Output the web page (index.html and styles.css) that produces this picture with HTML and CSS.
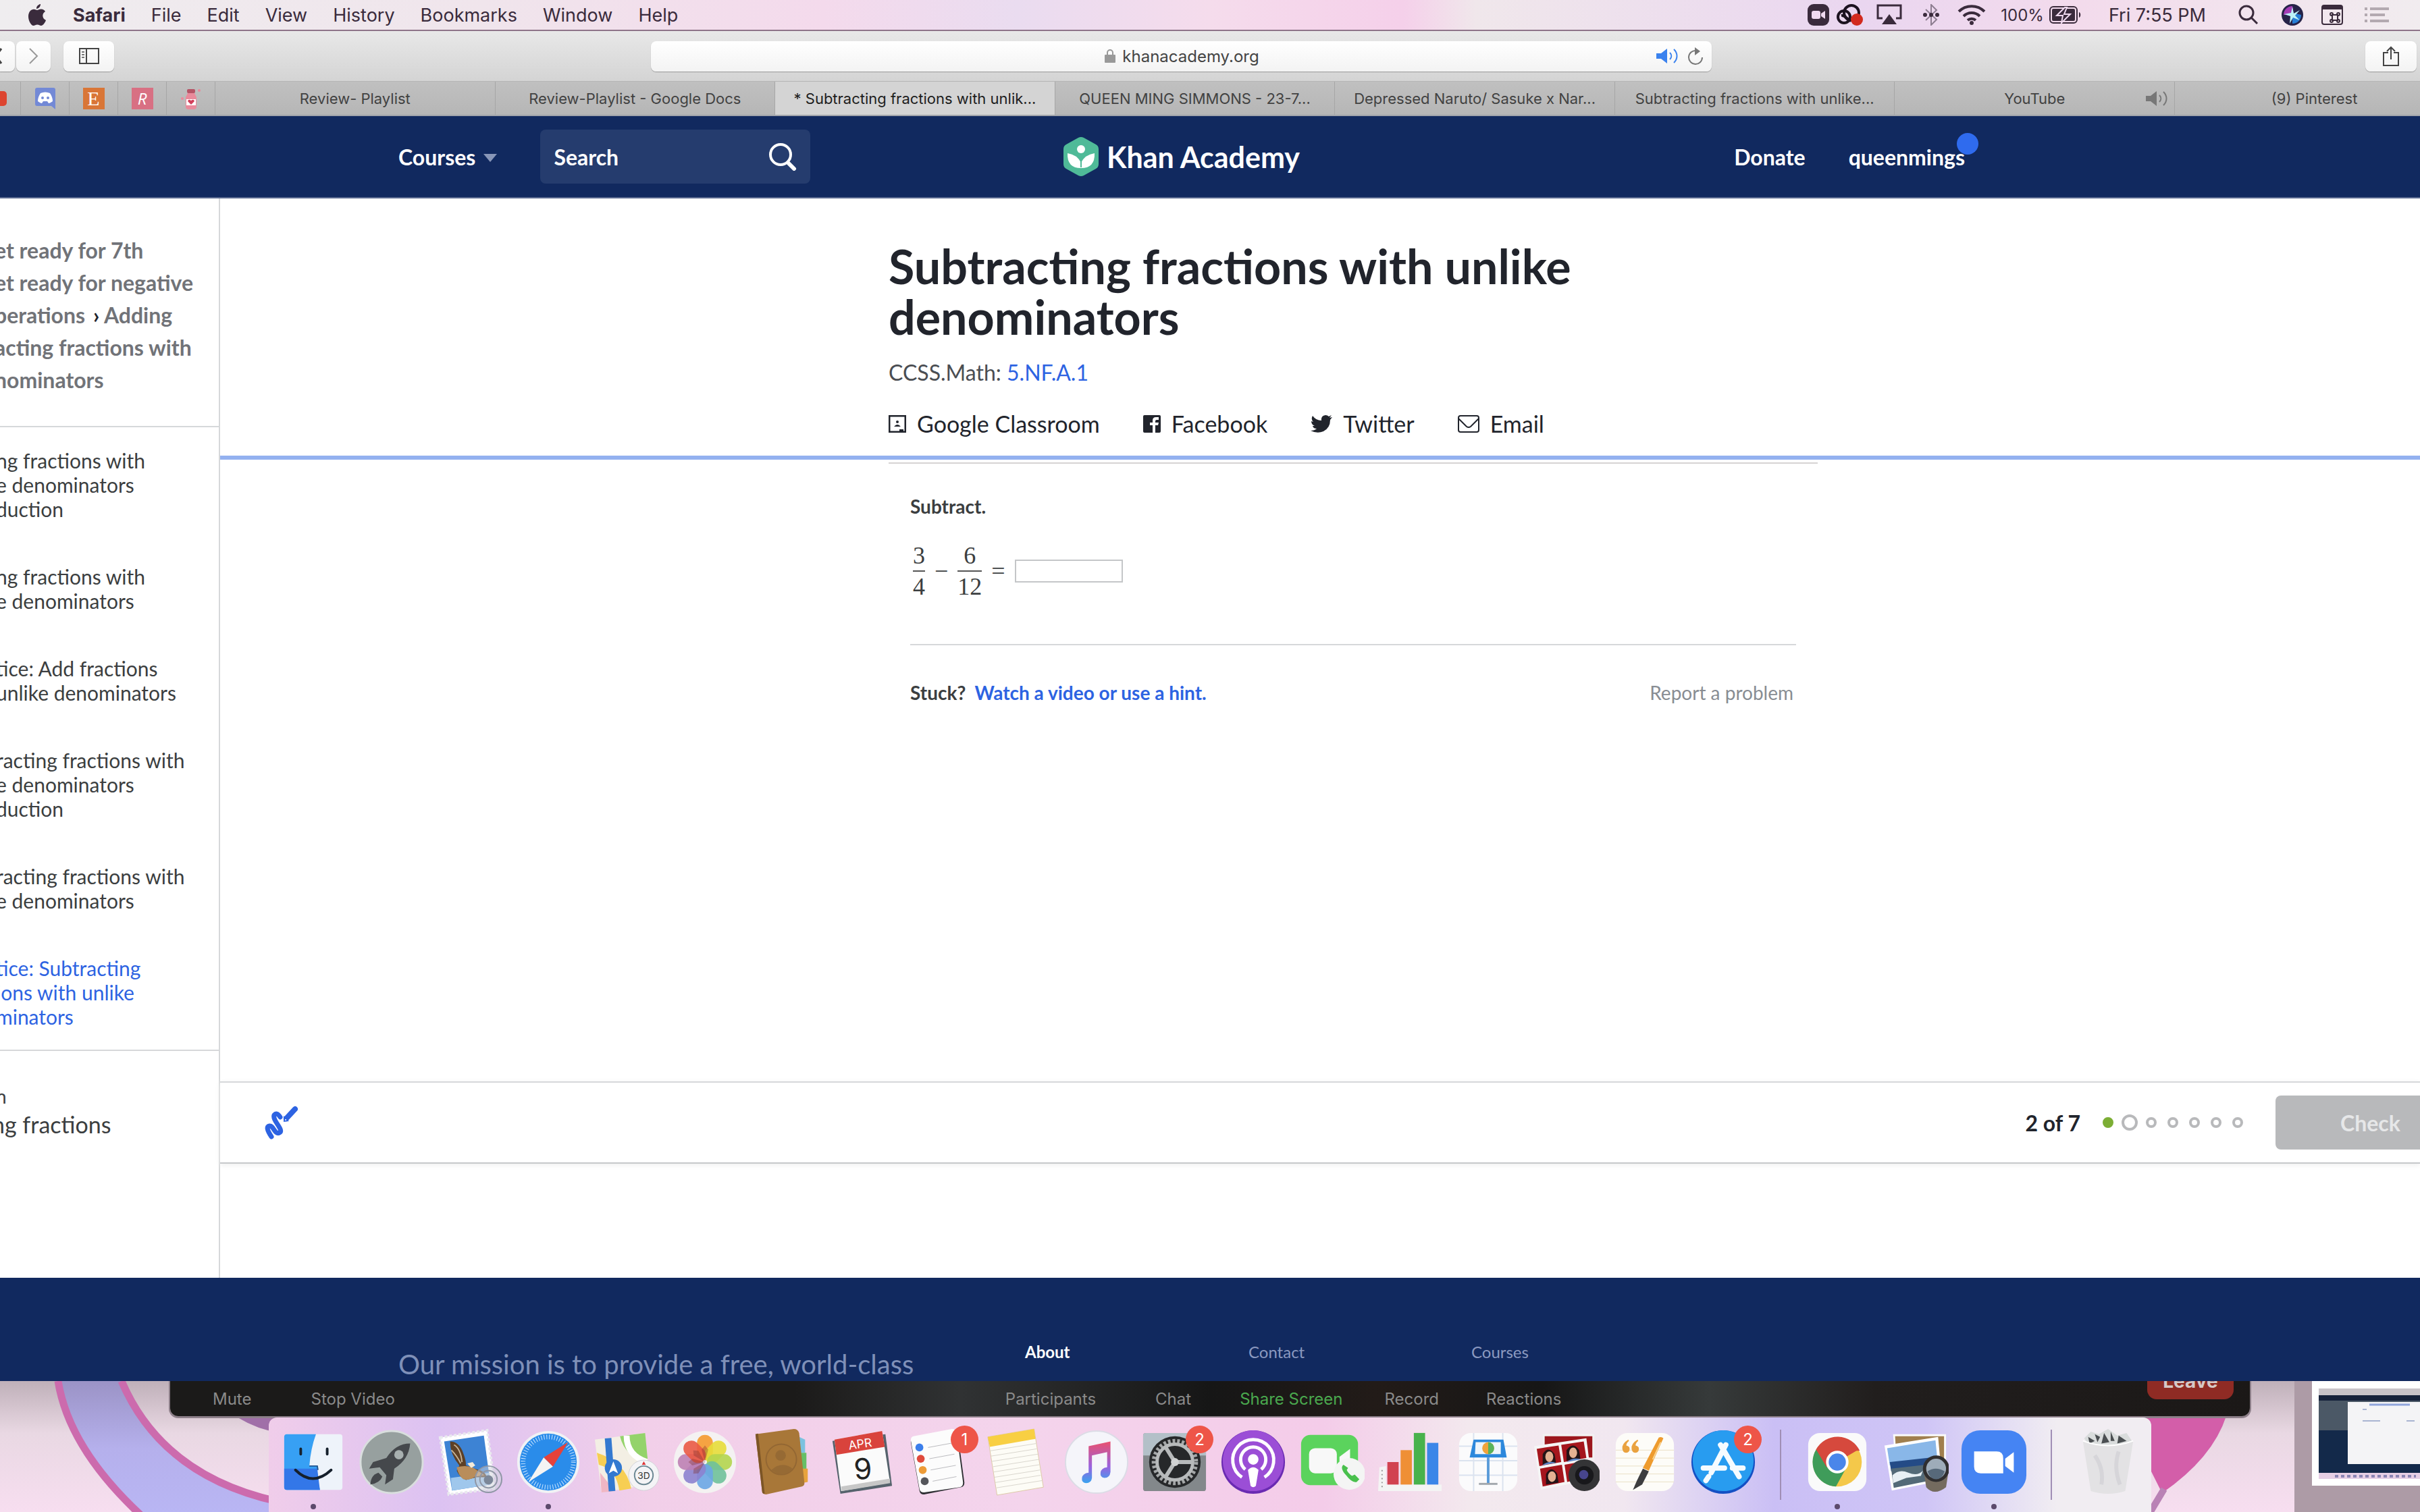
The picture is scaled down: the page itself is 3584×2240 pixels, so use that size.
FILE: index.html
```html
<!DOCTYPE html>
<html lang="en">
<head>
  <meta charset="UTF-8" />
  <meta name="viewport" content="width=device-width, initial-scale=1.0" />
  <title>Subtracting fractions with unlike denominators | Khan Academy</title>
  <link rel="stylesheet" href="styles.css">
</head>
<body>
  <div class="menubar">
    <svg class="apple" viewBox="0 0 26 32"><path d="M18 0c.3 3-2.400 7-6 7-.4-3 2.500-6.500 6-7zM13 9c1.500 0 3-1.500 6-1.400 2.600.1 4.800 1.500 6 3.400-5.500 3.400-4.500 10.500 1 13-1 3-4 7.800-7 7.900-2.300 0-3-1.400-5.700-1.400S9.700 31.900 7.500 32C4 32 0 24.500 0 18.500 0 11.500 4 7.800 8 7.700c2.500 0 4 1.300 5 1.300z"/></svg>
    <nav class="menus">
      <b>Safari</b><span>File</span><span>Edit</span><span>View</span><span>History</span><span>Bookmarks</span><span>Window</span><span>Help</span>
    </nav>
    <div class="status">
      <svg class="s32" viewBox="0 0 32 32"><rect width="32" height="32" rx="9"/><rect x="6" y="10" width="13" height="12" rx="3" fill="#f0daf0"/><path d="M20 14l6-4v12l-6-4z" fill="#f0daf0"/></svg>
      <svg class="cc" viewBox="0 0 42 34"><g fill="none" stroke="#1c1220" stroke-width="4"><circle cx="12" cy="20" r="9"/><circle cx="23" cy="14" r="11"/><path d="M8 18c6-1 8 6 14 8"/></g><circle cx="31" cy="24" r="9" fill="#d22a1e"/></svg>
      <svg class="airplay" viewBox="0 0 38 32"><path d="M9 21H2V2h34v19h-7" fill="none" stroke="#3a2b3c" stroke-width="3"/><path d="M19 15l11 15H8z"/></svg>
      <svg class="bt" viewBox="0 0 24 32"><path d="M4 8l16 15-8 8V1l8 8L4 24" fill="none" stroke="#8d7d90" stroke-width="2"/><circle cx="3" cy="16" r="3"/><circle cx="12" cy="16" r="3"/><circle cx="21" cy="16" r="3"/></svg>
      <svg class="wifi" viewBox="0 0 42 32"><g fill="none" stroke="#3a2b3c" stroke-width="4"><path d="M2 11a27 27 0 0 1 38 0"/><path d="M9 18a17 17 0 0 1 24 0"/><path d="M15 24a9 9 0 0 1 12 0"/></g><circle cx="21" cy="28" r="3"/></svg>
      <span class="percent">100%</span>
      <svg class="battery" viewBox="0 0 48 26"><rect x="1" y="1" width="40" height="24" rx="5" fill="none" stroke="#3a2b3c" stroke-width="2"/><rect x="4" y="4" width="34" height="18" rx="2"/><path d="M23 2l-12 12h9l-2 11 13-13h-9l4-10z" stroke="#f0daf0" stroke-width="2"/><path d="M44 9c3 1 3 7 0 8z"/></svg>
      <span class="clock">Fri 7:55 PM</span>
      <svg class="spot" viewBox="0 0 30 30"><circle cx="12" cy="12" r="10" fill="none" stroke="#3a2b3c" stroke-width="3"/><path d="M19 19l9 9" stroke="#3a2b3c" stroke-width="3"/></svg>
      <svg class="s32" viewBox="0 0 32 32"><circle cx="16" cy="16" r="16" fill="#262348"/><path d="M3 16a13 13 0 0 1 13-13l2 13z" fill="#a33bb5"/><path d="M16 29a13 13 0 0 0 13-13l-13-3z" fill="#277fd6"/><path d="M16 4l2 10 9-5-7 8 7 7-10-4-5 9 1-11-9-3 10-2z" fill="#bdf3f6"/></svg>
      <svg class="kbd" viewBox="0 0 32 30"><rect x="1" y="1" width="30" height="28" rx="3" fill="none" stroke="#3a2b3c" stroke-width="2"/><path d="M1 1h30v6H1z"/><path d="M16 15h8v8h-8z" fill="none" stroke="#3a2b3c" stroke-width="2"/><g fill="none" stroke="#3a2b3c" stroke-width="2"><circle cx="15" cy="14" r="2"/><circle cx="25" cy="14" r="2"/><circle cx="15" cy="24" r="2"/><circle cx="25" cy="24" r="2"/></g></svg>
      <svg class="listicon" viewBox="0 0 36 22"><path d="M0 2h4M8 2h28M0 11h4M8 11h22M0 20h4M8 20h28" stroke="#b3a9b0" stroke-width="4"/></svg>
    </div>
  </div>

  <div class="toolbar">
    <div class="tools">
      <button class="back" aria-label="Back"><svg viewBox="0 0 12 24"><path d="M2 1L-6 12l8 11" fill="none" stroke="#444" stroke-width="3"/></svg></button>
      <button class="forward" aria-label="Forward"><svg viewBox="0 0 14 24"><path d="M1 1l11 11L1 23" fill="none" stroke="#999" stroke-width="2"/></svg></button>
      <button class="panel" aria-label="Show sidebar"><svg viewBox="0 0 30 24"><path d="M1 1h28v22H1zM11 1v22" fill="none" stroke="#444" stroke-width="2"/><path d="M4 6h4M4 10h4M4 14h4" stroke="#777" stroke-width="2"/></svg></button>
    </div>
    <div class="address">
      <span class="host"><svg viewBox="0 0 16 20"><path d="M4 9V5a4 4 0 0 1 8 0v4" fill="none" stroke="#999" stroke-width="2"/><rect y="8" width="16" height="12" rx="1" fill="#999"/></svg>khanacademy.org</span>
      <svg class="sound" viewBox="0 0 34 22"><path d="M0 7h7l9-7v22l-9-7H0z" fill="#3b82ee"/><path d="M20 6c3 3 3 7 0 10M26 1c6 6 6 14 0 20" fill="none" stroke="#3b82ee" stroke-width="2"/></svg>
      <svg class="reload" viewBox="0 0 24 26"><path d="M13 5a10 10 0 1 0 9 10" fill="none" stroke="#777" stroke-width="2"/><path d="M11 0l8 6-8 6z" fill="#777"/></svg>
    </div>
    <button class="share" aria-label="Share"><svg viewBox="0 0 24 30"><path d="M8 10H1v19h22V10h-7M12 20V2M6 8l6-6 6 6" fill="none" stroke="#444" stroke-width="2"/></svg></button>
  </div>

  <div class="tabs">
    <div class="pin cut"><svg viewBox="0 0 10 22"><path d="M0 0h5a5 5 0 0 1 5 5v12a5 5 0 0 1-5 5H0z" fill="#dd4530"/></svg></div>
    <div class="pin"><svg viewBox="0 0 32 32"><path d="M4 0h24a3 3 0 0 1 3 3v29l-6-5H4a3 3 0 0 1-3-3V3a3 3 0 0 1 3-3z" fill="#7389d6"/><path d="M9 8q7-3 14 0 4 6 4 12-4 3-6 3l-2-3h-6l-2 3q-2 0-6-3 0-6 4-12z" fill="#fff"/><circle cx="12" cy="15" r="2" fill="#7389d6"/><circle cx="20" cy="15" r="2" fill="#7389d6"/></svg></div>
    <div class="pin"><span class="etsy">E</span></div>
    <div class="pin"><span class="redbubble">R</span></div>
    <div class="pin"><svg viewBox="0 0 32 32"><rect x="10" y="2" width="12" height="6" rx="2" fill="#b65466"/><path d="M11 8h10l3 6v14a4 4 0 0 1-4 4h-8a4 4 0 0 1-4-4V14z" fill="#e98a9b"/><path d="M9 17h14v9H9z" fill="#fff"/><path d="M16 25l-5-5q1-4 5-1 4-3 5 1z" fill="#d2405b"/><circle cx="28" cy="4" r="2" fill="#e98a9b"/><circle cx="3" cy="16" r="2" fill="#e98a9b"/></svg></div>
    <div class="tab">Review- Playlist</div>
    <div class="tab">Review-Playlist - Google Docs</div>
    <div class="tab current">* Subtracting fractions with unlik...</div>
    <div class="tab">QUEEN MING SIMMONS - 23-7...</div>
    <div class="tab">Depressed Naruto/ Sasuke x Nar...</div>
    <div class="tab">Subtracting fractions with unlike...</div>
    <div class="tab">YouTube<svg class="tabsound" viewBox="0 0 34 22"><path d="M0 7h7l9-7v22l-9-7H0z" fill="#777"/><path d="M20 6c3 3 3 7 0 10M26 1c6 6 6 14 0 20" fill="none" stroke="#777" stroke-width="2"/></svg></div>
    <div class="tab last">(9) Pinterest</div>
  </div>

  <header class="site-header">
    <div class="header-left">
      <a class="courses" href="#">Courses<svg viewBox="0 0 20 12"><path d="M0 0h20L10 12z" fill="#8896b8"/></svg></a>
      <div class="search">
        <input type="text" aria-label="Search" placeholder="Search">
        <svg viewBox="0 0 42 42"><circle cx="18" cy="18" r="15" fill="none" stroke="#fff" stroke-width="4"/><path d="M29 30l9 9" stroke="#fff" stroke-width="6" stroke-linecap="round"/></svg>
      </div>
    </div>
    <a class="logo" href="#">
      <svg viewBox="0 0 52 58"><path d="M22 1q4-2 8 0l18 10q4 2 4 7v22q0 5-4 7L30 57q-4 2-8 0L4 47q-4-2-4-7V18q0-5 4-7z" fill="#4fba98"/><circle cx="26" cy="18" r="6" fill="#fff"/><path d="M6 24q14 2 20 14 6-12 20-14 1 22-20 22Q5 46 6 24z" fill="#fff"/><path d="M26 35v10" stroke="#4fba98" stroke-width="2"/></svg>
      Khan Academy
    </a>
    <div class="header-right">
      <a href="#">Donate</a>
      <a class="user" href="#">queenmings<span class="badge"></span></a>
    </div>
  </header>

  <div class="page">
    <aside class="sidebar">
      <div class="crumbs">et ready for 7th<br>et ready for negative<br>perations <i>&rsaquo;</i> Adding<br>acting fractions with<br>nominators</div>
      <ul class="lessons">
        <li><a href="#">ng fractions with<br>e denominators<br>duction</a></li>
        <li><a href="#">ng fractions with<br>e denominators</a></li>
        <li><a href="#">tice: Add fractions<br>unlike denominators</a></li>
        <li><a href="#">racting fractions with<br>e denominators<br>duction</a></li>
        <li><a href="#">racting fractions with<br>e denominators</a></li>
        <li><a class="active" href="#">tice: Subtracting<br>ions with unlike<br>minators</a></li>
      </ul>
      <div class="next"><small>n</small><br>ng fractions</div>
    </aside>

    <main>
      <div class="intro">
        <h1>Subtracting fractions with unlike denominators</h1>
        <p class="standard">CCSS.Math: <a href="#">5.NF.A.1</a></p>
        <div class="sharing">
          <a href="#"><svg class="i26" viewBox="0 0 26 26"><rect x="1" y="1" width="24" height="24" fill="none" stroke="#21242c" stroke-width="3"/><circle cx="13" cy="10" r="2"/><path d="M8 17q5-6 10 0zM16 21h6v3h-6z"/></svg>Google Classroom</a>
          <a href="#"><svg class="i26" viewBox="0 0 26 26"><rect width="26" height="26" rx="2"/><path d="M14 26V15h-4v-4h4V8q0-5 5-5h4v4h-3q-2 0-2 2v2h5l-1 4h-4v11z" fill="#fff"/></svg>Facebook</a>
          <a href="#"><svg class="i32" viewBox="0 0 32 26"><path d="M32 3l-3 4q0 12-10 17-9 4-19-1 6 0 9-3-5 0-6-4h3q-5-2-5-7l3 1q-4-4-1-9 5 7 13 7Q15 1 22 0q3 0 5 2l4-2-3 4z"/></svg>Twitter</a>
          <a href="#"><svg class="i32" viewBox="0 0 32 26"><rect x="1" y="1" width="30" height="24" rx="3" fill="none" stroke="#21242c" stroke-width="2"/><path d="M1 5l12 12q3 2 6 0L31 5" fill="none" stroke="#21242c" stroke-width="2"/></svg>Email</a>
        </div>
      </div>
      <div class="exercise">
        <div class="question">
          <p class="prompt"><label for="answer">Subtract.</label></p>
          <div class="equation">
            <span class="frac"><span>3</span><span>4</span></span>
            <span>&minus;</span>
            <span class="frac"><span>6</span><span>12</span></span>
            <span>=</span>
            <input id="answer" type="text">
          </div>
          <div class="stuck">
            <span><b>Stuck?</b> <a href="#">Watch a video or use a hint.</a></span>
            <a class="report" href="#">Report a problem</a>
          </div>
        </div>
      </div>
      <div class="taskbar">
        <button class="scratch" aria-label="Scratchpad"><svg viewBox="0 0 50 50"><path d="M10 46Q0 31 7 30c6-1 8 14 15 10 7-4-11-18-8-26q4-5 9 3" fill="none" stroke="#2d63e2" stroke-width="7" stroke-linecap="round" stroke-linejoin="round"/><path d="M32 19L45 5" stroke="#2d63e2" stroke-width="8" stroke-linecap="round"/><path d="M28 15l8 8-8 1z" fill="#2d63e2"/><circle cx="31" cy="21" r="1" fill="#fff"/></svg></button>
        <div class="progress">
          <span class="count">2 of 7</span>
          <span class="dot done"></span><span class="dot now"></span><span class="dot"></span><span class="dot"></span><span class="dot"></span><span class="dot"></span><span class="dot"></span>
        </div>
        <button class="check" disabled>Check</button>
      </div>
    </main>
  </div>

  <footer class="site-footer">
    <p class="mission">Our mission is to provide a free, world-class</p>
    <a class="about" href="#">About</a>
    <a href="#">Contact</a>
    <a href="#">Courses</a>
  </footer>

  <div class="desktop">
    <svg class="wallpaper" viewBox="0 0 3584 194" preserveAspectRatio="none">
      <defs>
        <linearGradient id="wall" x2="0" y2="1"><stop offset="0" stop-color="#bfb0b9"/><stop offset=".4" stop-color="#e9d8e3"/><stop offset="1" stop-color="#f7def0"/></linearGradient>
        <linearGradient id="band" x2="0" y2="1"><stop offset="0" stop-color="#9b93c6"/><stop offset=".5" stop-color="#b5b0ec"/><stop offset="1" stop-color="#b9b6f4"/></linearGradient>
      </defs>
      <rect width="3584" height="194" fill="url(#wall)"/>
      <path d="M86 0Q102 100 210 200h300l-110-22Q240 140 180 0z" fill="url(#band)"/>
      <path d="M86 0Q102 100 210 200M180 0Q240 140 410 178" fill="none" stroke="#cc6bad" stroke-width="11"/>
      <path d="M352 54q30 18 60 22V54z" fill="#a06fa8"/>
      <path d="M3100 52h197q-20 62-95 114l-30-60z" fill="#d35ea9"/>
      <path d="M3205 160l-24 40" stroke="#b982b5" stroke-width="10"/>
    </svg>
    <div class="zoombar">
      <span class="z-mute">Mute</span><span class="z-video">Stop Video</span>
      <span class="z-mid">Participants</span><span class="z-chat">Chat</span><span class="z-share">Share Screen</span><span class="z-rec">Record</span><span class="z-react">Reactions</span>
      <button class="leave">Leave</button>
    </div>

    <div class="dock">
      <!-- Finder -->
      <div class="app running"><svg viewBox="0 0 100 100"><rect x="6" y="8" width="88" height="84" rx="4" fill="#eef3fa"/><path d="M10 8h44q-8 22-10 48h12q0 20 4 36H10a4 4 0 0 1-4-4V12a4 4 0 0 1 4-4z" fill="#37a0f4"/><path d="M6 60h50l4 32H10a4 4 0 0 1-4-4z" fill="#3377e8"/><path d="M44 56h12l1 6" fill="none" stroke="#24558f" stroke-width="2"/><path d="M31 30v8M71 30v8M23 62q26 26 54 0" fill="none" stroke="#16202c" stroke-width="4" stroke-linecap="round"/></svg></div>
      <!-- Launchpad -->
      <div class="app"><svg viewBox="0 0 100 100"><circle cx="50" cy="50" r="47" fill="#97a09f" stroke="#d9dede" stroke-width="3"/><path d="M78 22q-22 0-36 22l-20 6-6 10 16-2 10 12-2 14 12-8 2-16q22-14 24-38z" fill="#45484c"/><circle cx="61" cy="39" r="7" fill="#a8b0b0"/><path d="M30 66q-12 4-12 18 14-2 18-12z" fill="#45484c"/></svg></div>
      <!-- Mail -->
      <div class="app"><svg viewBox="0 0 100 100"><path d="M5 13L76 2l12 88-70 9z" fill="#fff" stroke="#e9e9ee" stroke-width="4" stroke-dasharray="4 3"/><path d="M11 19l60-9 10 74-58 9z" fill="#3d83d4"/><path d="M21 74l58-8 2 18-58 9z" fill="#9fc7ec"/><path d="M20 19q14 0 20 18 4 10 4 18l16 6q12 2 16 12-10 0-16 0l-16 4q-10-4-14-14l4-8q-14-16-14-36z" fill="#5d4026"/><path d="M30 58q12-4 24 0l18 12-14 2q-8 6-18 4-8-6-10-18z" fill="#b98d5b"/><path d="M46 52l8-2 4 5-6 4z" fill="#f3ead9"/><path d="M26 24q10 6 12 26M22 32q8 8 14 20" stroke="#c7b294" stroke-width="2" fill="none"/><circle cx="78" cy="76" r="20" fill="#cfd3dc" fill-opacity=".5" stroke="#8f96a5" stroke-width="2"/><circle cx="78" cy="76" r="13" fill="none" stroke="#8f96a5" stroke-width="2"/><circle cx="78" cy="77" r="7" fill="#7c8798"/></svg></div>
      <!-- Safari -->
      <div class="app running"><svg viewBox="0 0 100 100"><circle cx="50" cy="50" r="47" fill="#f0f2f5"/><circle cx="50" cy="50" r="43" fill="#2a8cea"/><circle cx="50" cy="50" r="38" fill="none" stroke="#cfe7ff" stroke-width="7" stroke-dasharray="1 3"/><path d="M80 20L57 57 43 43z" fill="#e5423b"/><path d="M20 80l23-37 14 14z" fill="#f4f4f4"/></svg></div>
      <!-- Maps -->
      <div class="app"><svg viewBox="0 0 100 100"><path d="M2 16L78 6l6 78-72 12z" fill="#f3efe4"/><path d="M40 11l38-5 4 42q-34-4-42-37z" fill="#94d36b"/><path d="M50 10q0 30 31 40" fill="none" stroke="#fff" stroke-width="9"/><path d="M5 36q44 14 52 54l-18 3Q34 60 8 54z" fill="#f7ce53"/><path d="M10 66l22 28-20 2z" fill="#f0b6c4"/><path d="M22 14l6 80" stroke="#3379d0" stroke-width="10"/><circle cx="30" cy="59" r="13" fill="#3379d0"/><path d="M30 49l7 18-7-4-7 4z" fill="#fff"/><circle cx="76" cy="70" r="23" fill="#f4f4f6" stroke="#d2d2d8" stroke-width="1"/><circle cx="76" cy="70" r="14" fill="none" stroke="#6b8793" stroke-width="2"/><path d="M76 49l3 5h-6z" fill="#d33"/><text x="76" y="75" text-anchor="middle" font-family="Inter, sans-serif" font-size="14" fill="#333">3D</text></svg></div>
      <!-- Photos -->
      <div class="app"><svg viewBox="0 0 100 100"><circle cx="50" cy="50" r="47" fill="#f4f2f2"/><g fill-opacity=".9"><rect x="38" y="9" width="24" height="38" rx="12" fill="#f59a2f"/><rect x="38" y="9" width="24" height="38" rx="12" fill="#e7dd3a" transform="rotate(45 50 50)"/><rect x="38" y="9" width="24" height="38" rx="12" fill="#b4d54e" transform="rotate(90 50 50)"/><rect x="38" y="9" width="24" height="38" rx="12" fill="#6fc19a" transform="rotate(135 50 50)"/><rect x="38" y="9" width="24" height="38" rx="12" fill="#6ba6e4" transform="rotate(180 50 50)"/><rect x="38" y="9" width="24" height="38" rx="12" fill="#8c82cf" transform="rotate(225 50 50)"/><rect x="38" y="9" width="24" height="38" rx="12" fill="#be7fb4" transform="rotate(270 50 50)"/><rect x="38" y="9" width="24" height="38" rx="12" fill="#ea5a45" transform="rotate(315 50 50)"/></g><g fill="#7c2f2a" fill-opacity=".35"><path d="M50 50l-5-19 5-6 5 6z"/><path d="M50 50l-5-19 5-6 5 6z" transform="rotate(270 50 50)"/><path d="M50 50l-5-19 5-6 5 6z" transform="rotate(225 50 50)"/><path d="M50 50l-5-19 5-6 5 6z" transform="rotate(315 50 50)"/></g></svg></div>
      <!-- Contacts -->
      <div class="app"><svg viewBox="0 0 100 100"><path d="M74 12l9 4v20h-9z" fill="#7cc2e0"/><path d="M76 36h9v26h-9z" fill="#67bf67"/><path d="M78 60h9v20l-9 2z" fill="#e7a33c"/><path d="M8 8L66 0q6 0 8 6l8 76q0 4-4 5L24 99q-6 0-6-5z" fill="#a87738"/><path d="M8 8l4-1 10 91q-4 0-4-4z" fill="#7c5526"/><circle cx="47" cy="46" r="23" fill="none" stroke="#936733" stroke-width="2"/><circle cx="46" cy="40" r="8" fill="#966a34"/><path d="M32 62q16-14 32-2-14 16-32 2z" fill="#966a34"/></svg></div>
      <!-- Calendar -->
      <div class="app"><svg viewBox="0 0 100 100"><path d="M6 18l80-10 10 78-78 12z" fill="#56636d"/><path d="M9 16L81 3l12 78-74 13z" fill="#fbfbfb"/><path d="M9 16L81 3l4 24-73 12z" fill="#d9433c"/><text x="48" y="29" text-anchor="middle" font-family="Inter, sans-serif" font-size="18" fill="#fff" transform="rotate(-8 48 24)">APR</text><text x="52" y="76" text-anchor="middle" font-family="Inter, sans-serif" font-size="44" fill="#222" transform="rotate(-5 52 60)">9</text><path d="M19 87l74-12v7l-73 12z" fill="#c7c7c7"/></svg></div>
      <!-- Reminders -->
      <div class="app"><svg viewBox="0 0 100 100"><path d="M10 14L70 2q6 0 7 5l10 74q0 6-5 7L26 99q-6 0-7-6L6 20q0-5 4-6z" fill="#2e2f33"/><path d="M10 11L68 0q6 0 7 5l10 76q0 6-5 7L26 96q-6 0-7-6L6 17q0-5 4-6z" fill="#fcfcfc"/><circle cx="19" cy="28" r="6" fill="#3b7eeb"/><circle cx="21" cy="45" r="6" fill="#e04a3c"/><circle cx="24" cy="62" r="6" fill="#ed9b37"/><circle cx="27" cy="79" r="6" fill="#55565b"/><path d="M32 28l38-7M34 45l38-7M36 62l38-7M39 79l36-7" stroke="#b9b9bd" stroke-width="1"/></svg><span class="count-badge">1</span></div>
      <!-- Notes -->
      <div class="app"><svg viewBox="0 0 100 100"><path d="M4 12L74 0l14 88-70 12z" fill="#fdfcf6" stroke="#dcc9a6"/><path d="M4 12L74 0l2 15L7 27z" fill="#f8cf43"/><path d="M8 33l69-11M9 41l69-11M10 49l70-11M12 57l69-11M13 65l69-11M14 73l69-11M15 81l69-11M17 89l69-11" stroke="#d8d5cd" stroke-width="1"/></svg></div>
      <!-- Music -->
      <div class="app"><svg viewBox="0 0 100 100"><defs><linearGradient id="note" x2="0" y2="1"><stop offset="0" stop-color="#e9526f"/><stop offset=".6" stop-color="#9a61de"/><stop offset="1" stop-color="#38a4f0"/></linearGradient></defs><circle cx="50" cy="50" r="47" fill="#f5f5fa" stroke="#dcdce6" stroke-width="2"/><path d="M38 26l33-7v46q-1 9-9 9-7-1-6-8 1-7 10-8V35l-23 5v34q-1 8-9 8-7-1-6-8 1-7 10-8z" fill="url(#note)"/></svg></div>
      <!-- System Preferences -->
      <div class="app"><svg viewBox="0 0 100 100"><rect x="2" y="6" width="95" height="88" rx="4" fill="#83888b"/><path d="M2 10q0-4 4-4h87q4 0 4 4v30H2z" fill="#b3c0c8"/><circle cx="50" cy="50" r="39" fill="#26282a"/><circle cx="50" cy="50" r="32" fill="none" stroke="#a4a7a8" stroke-width="6" stroke-dasharray="4 3"/><circle cx="50" cy="50" r="27" fill="none" stroke="#b7babb" stroke-width="5"/><path d="M50 50L35 26M50 50h28M50 50L35 74" stroke="#b7babb" stroke-width="6"/><circle cx="50" cy="50" r="6" fill="#d0d2d3"/></svg><span class="count-badge">2</span></div>
      <!-- Podcasts -->
      <div class="app"><svg viewBox="0 0 100 100"><circle cx="50" cy="50" r="48" fill="#6a2bb2"/><circle cx="50" cy="48" r="46" fill="#9b4ed6"/><path d="M33 73a31 31 0 1 1 34 0M38 61a19 19 0 1 1 24 0" fill="none" stroke="#fff" stroke-width="5"/><circle cx="50" cy="46" r="8" fill="#fff"/><path d="M42 62q8-8 16 0l-4 24q-4 4-8 0z" fill="#fff"/></svg></div>
      <!-- FaceTime -->
      <div class="app"><svg viewBox="0 0 100 100"><rect x="4" y="9" width="86" height="76" rx="14" fill="#5bd35d"/><rect x="16" y="29" width="42" height="38" rx="9" fill="#f8f8f8"/><path d="M62 42l16-12v34L62 54z" fill="#f8f8f8"/><circle cx="77" cy="68" r="24" fill="#f4f5f4"/><path d="M68 54q-6 5 4 16 9 12 16 10l4-4-7-7-4 2q-6-4-8-9l2-3z" fill="#49c04d"/></svg></div>
      <!-- Numbers -->
      <div class="app"><svg viewBox="0 0 100 100"><path d="M4 58l10-2v28h84v10H2z" fill="#f4f4f4"/><path d="M8 62v28" stroke="#999" stroke-width="2" stroke-dasharray="2 4"/><rect x="16" y="50" width="17" height="34" fill="#d14250"/><rect x="36" y="32" width="17" height="52" fill="#ef8f35"/><rect x="56" y="6" width="17" height="78" fill="#48b24c"/><rect x="76" y="21" width="17" height="63" fill="#3b86e8"/></svg></div>
      <!-- Keynote -->
      <div class="app"><svg viewBox="0 0 100 100"><rect x="6" y="6" width="88" height="88" rx="18" fill="#fbfbfc"/><path d="M6 26h88M6 48h88M6 70h88M28 6v88M72 6v88" stroke="#dbe3ef" stroke-width="2"/><path d="M28 16h45l5 27H22z" fill="#2c88dc"/><path d="M31 20h38v18H30z" fill="#eef5fb"/><circle cx="50" cy="29" r="9" fill="#f0a33c"/><path d="M50 20a9 9 0 0 1 0 18z" fill="#58b35b"/><path d="M50 43v39" stroke="#5a9bd9" stroke-width="4"/><path d="M36 83h28" stroke="#a2a7ad" stroke-width="3"/></svg></div>
      <!-- Photo Booth -->
      <div class="app"><svg viewBox="0 0 100 100"><path d="M14 8h78v40H16z" fill="#f2f2f2"/><path d="M17 11h72v32H17z" fill="#9c171d"/><path d="M1 26L80 14l8 62-77 16z" fill="#f5f5f5"/><path d="M5 30l33-5 4 25-33 6zM42 24l34-5 4 25-34 6zM10 60l33-6 4 26-33 7zM47 54l34-6 4 24-34 8z" fill="#a5161d"/><path d="M14 54V38q8-14 18 0l2 13zM50 48V32q10-14 19 0l2 13zM19 84V68q8-14 17 0l2 13z" fill="#241417"/><ellipse cx="24" cy="42" rx="6" ry="8" fill="#e4b192"/><ellipse cx="60" cy="36" rx="6" ry="8" fill="#e4b192"/><ellipse cx="28" cy="72" rx="6" ry="8" fill="#e4b192"/><path d="M50 50q10-8 22-4zM13 55q10-8 21-4z" fill="#5b87c9"/><circle cx="77" cy="70" r="24" fill="#343436"/><circle cx="77" cy="70" r="14" fill="#18181b"/><circle cx="76" cy="69" r="7" fill="#47458c"/></svg></div>
      <!-- Pages -->
      <div class="app"><svg viewBox="0 0 100 100"><rect x="6" y="6" width="88" height="88" rx="18" fill="#fdfcf8"/><path d="M6 32h88M6 44h88M6 56h88M6 68h88M6 80h88" stroke="#eadfc5" stroke-width="1"/><path d="M25 16q-10 6-9 14 1 6 6 6 5-1 5-6 0-4-5-5 0-4 4-7zM39 16q-10 6-9 14 1 6 6 6 5-1 5-6 0-4-5-5 0-4 4-7z" fill="#eaa23f"/><path d="M71 13q4-2 7 1L56 63l-9-4z" fill="#ee9b2e"/><path d="M47 60l9 4-10 20-14 8 6-14z" fill="#3d3d3f"/><path d="M74 20L62 46" stroke="#f9d592" stroke-width="2"/></svg></div>
      <!-- App Store -->
      <div class="app"><svg viewBox="0 0 100 100"><circle cx="50" cy="50" r="48" fill="#1450c4"/><circle cx="50" cy="48" r="46" fill="#289cf0"/><path d="M54 24L32 66M46 24l28 48M20 59h32M64 59h16M28 72l-4 6" fill="none" stroke="#f5fbff" stroke-width="8" stroke-linecap="round"/></svg><span class="count-badge">2</span></div>
      <span class="sep"></span>
      <!-- Chrome -->
      <div class="app running"><svg viewBox="0 0 100 100"><rect x="6" y="6" width="88" height="88" rx="18" fill="#fafafa"/><circle cx="50" cy="50" r="37" fill="#f4c84a"/><path d="M50 50L18 31a37 37 0 0 1 64 0z" fill="#d6493d"/><path d="M50 50L18 31a37 37 0 0 0 30 56l16-29z" fill="#3f9c5a"/><path d="M50 33h34a37 37 0 0 0-66-2l16 27z" fill="#d6493d"/><circle cx="50" cy="50" r="17" fill="#fff"/><circle cx="50" cy="50" r="13" fill="#4a86ea"/></svg></div>
      <!-- Preview -->
      <div class="app"><svg viewBox="0 0 100 100"><path d="M16 8h80v60H20z" fill="#fafafa"/><path d="M19 11h74v50H22z" fill="#a07f4e"/><path d="M3 25L84 12l6 66-76 15z" fill="#fff"/><path d="M7 29l73-12 3 30-72 8z" fill="#89b7e8"/><path d="M11 50l72-8 1 12-71 10z" fill="#244b86"/><path d="M13 60l71-8 3 23-70 14z" fill="#536a78"/><path d="M15 70q10-10 24-4t22-3l-3 8-22 3-20 8z" fill="#e7eff4"/><path d="M62 62l4 26q12 14 30 0l4-26z" fill="#746b5f"/><circle cx="81" cy="60" r="20" fill="#302f30"/><circle cx="81" cy="60" r="15" fill="#9eacb9"/><path d="M68 64q12-8 26 0-4 12-13 12t-13-12z" fill="#57697a"/></svg></div>
      <!-- Zoom -->
      <div class="app running"><svg viewBox="0 0 100 100"><rect x="1" y="2" width="98" height="96" rx="28" fill="#4584f3"/><path d="M20 34h34q10 0 10 10v23H30q-10 0-10-10z" fill="#fff"/><path d="M67 45l13-10v31L67 56z" fill="#fff"/></svg></div>
      <span class="sep"></span>
      <!-- Trash -->
      <div class="app"><svg viewBox="0 0 100 100"><path d="M14 14L24 4l12 4L50 0l14 10 14-4 8 12-10 8H22z" fill="#d9dcdc"/><path d="M20 12l10 6-8 4zM44 6l8 14-12 2zM66 10l12 8-14 4zM30 8l8 4-4 8zM54 4l6 14h-6z" fill="#4b4f52"/><path d="M12 18q38 14 76 0l-12 76q-26 8-52 0z" fill="#e3e2e4"/><path d="M12 18q38 14 76 0" fill="none" stroke="#fff" stroke-width="2"/><path d="M30 40q14 20 10 44M66 34q-8 24 2 50" fill="none" stroke="#d6d5d9" stroke-width="6"/></svg></div>
    </div>

    <div class="preview">
      <svg viewBox="0 0 150 134" preserveAspectRatio="none"><rect width="150" height="134" fill="#13294a"/><rect width="150" height="10" fill="#c9c4c9"/><path d="M0 17h150v45H0z" fill="#4b5866"/><path d="M0 10h150v8H0z" fill="#17233c"/><path d="M43 20h107v92H43z" fill="#f4f4f6"/><path d="M75 24h60" stroke="#90a5dc" stroke-width="3"/><path d="M65 48h26M65 31h6M130 48h12" stroke="#a9b4d2" stroke-width="2"/><path d="M0 125h150v9H0z" fill="#e6cfe5"/><path d="M24 130h120" stroke="#8b86b4" stroke-width="4" stroke-dasharray="5 4"/></svg>
    </div>
  </div>
</body>
</html>
```

FILE: styles.css
```css
* { box-sizing: border-box; }
body { margin: 0; min-height: 100vh; display: flex; flex-direction: column; font-family: Lato, sans-serif; color: #3b3e40; background: #fff; overflow-x: hidden; }
a { color: #2d63e2; text-decoration: none; }
button { font-family: inherit; border: 0; padding: 0; margin: 0; }
svg { display: block; flex: none; }
p, h1, ul { margin: 0; padding: 0; }

/* mac menu bar */
.menubar { height: 46px; padding: 0 46px 0 42px; display: flex; align-items: center; border-bottom: 2px solid #8e7489; background: linear-gradient(90deg, #efedef, #f0e5ec 20%, #f4daec 34%, #eadcf0 42%, #f5dcec 50%, #f5d0ea 58%, #f0e7eb 61%, #ead6f0 77%, #f3dbec 86%, #f1ecef); font-family: Inter, sans-serif; font-size: 27px; color: #3a2b3c; }
.menubar svg { fill: #3a2b3c; }
.apple { width: 26px; height: 32px; margin-right: 40px; }
.menus { display: flex; gap: 38px; }
.status { margin-left: auto; display: flex; align-items: center; }
.s32 { width: 32px; height: 32px; }
.cc { width: 42px; height: 34px; margin-left: 10px; }
.airplay { width: 38px; height: 32px; margin-left: 18px; }
.bt { width: 24px; height: 32px; margin-left: 31px; }
.wifi { width: 42px; height: 32px; margin-left: 27px; }
.percent { font-size: 24px; margin-left: 22px; }
.battery { width: 48px; height: 26px; margin-left: 8px; }
.clock { margin-left: 40px; }
.spot { width: 30px; height: 30px; margin: 0 34px 0 48px; }
.kbd { width: 34px; height: 30px; margin: 0 31px 0 26px; }
.listicon { width: 36px; height: 22px; }

/* browser toolbar */
.toolbar { height: 75px; padding-right: 5px; display: grid; grid-template-columns: 964px 1fr 968px 76px; align-items: center; background: linear-gradient(#e8e8e8, #d4d4d4); border-bottom: 1px solid #b5b5b5; }
.tools { display: flex; gap: 2px; }
.toolbar button { height: 45px; display: flex; align-items: center; justify-content: center; background: linear-gradient(#fff, #f3f3f3); border-radius: 8px; box-shadow: 0 1px 1px #999; }
.toolbar .back { width: 22px; border-radius: 0 8px 8px 0; justify-content: flex-start; }
.back svg { width: 12px; height: 24px; }
.toolbar .forward { width: 51px; }
.forward svg { width: 14px; height: 24px; }
.toolbar .panel { width: 75px; margin-left: 17px; }
.panel svg { width: 30px; height: 24px; }
.toolbar .share { width: 76px; grid-column: 4; }
.share svg { width: 24px; height: 30px; }
.address { height: 45px; padding: 0 12px; display: flex; align-items: center; gap: 12px; background: linear-gradient(#fff, #f3f3f3); border-radius: 8px; box-shadow: 0 1px 1px #999; font-family: Inter, sans-serif; font-size: 24px; color: #444; }
.host { flex: 1; padding-left: 84px; display: flex; align-items: center; justify-content: center; gap: 10px; }
.host svg { width: 16px; height: 20px; }
.sound, .tabsound { width: 34px; height: 22px; }
.reload { width: 24px; height: 26px; }

.tabs { height: 51px; display: flex; background: linear-gradient(#c0c0c0, #b6b6b6); border-bottom: 2px solid #a2a5ab; font-family: Inter, sans-serif; font-size: 22px; color: #424242; }
.pin { width: 72px; display: flex; align-items: center; justify-content: center; border-right: 1px solid #a6a6a6; }
.pin svg { width: 32px; height: 32px; }
.pin.cut { width: 31px; justify-content: flex-start; }
.pin.cut svg { width: 10px; height: 22px; }
.pin span { width: 32px; height: 32px; color: #fff; text-align: center; }
.etsy { background: #d97637; font: 30px/32px "Liberation Serif", serif; }
.redbubble { background: #d87083; font: italic 24px/32px "Open Sans", sans-serif; }
.tab { flex: 1 1 0; min-width: 0; display: flex; align-items: center; justify-content: center; white-space: nowrap; border-right: 1px solid #a6a6a6; position: relative; }
.tab.current { background: #d4d4d4; color: #1e1e1e; }
.tab.last { flex: 0 0 363px; padding-left: 50px; border: 0; }
.tabsound { position: absolute; right: 8px; }

/* site header */
.site-header { height: 122px; padding: 0 674px 0 590px; display: grid; grid-template-columns: 1fr auto 1fr; align-items: center; background: #11295f; border-bottom: 2px solid #5a6a90; font-size: 32px; font-weight: bold; }
.site-header a { color: #fff; }
.header-left { display: flex; align-items: center; gap: 64px; }
.courses { display: flex; align-items: center; gap: 12px; }
.courses svg { width: 20px; height: 12px; margin-top: 4px; }
.search { width: 400px; height: 80px; padding: 0 20px; display: flex; align-items: center; background: #253c6e; border-radius: 8px; }
.search input { flex: 1; min-width: 0; padding: 0; border: 0; background: none; font: inherit; color: #fff; }
.search input::placeholder { color: #fff; opacity: 1; }
.search svg { width: 42px; height: 42px; }
.logo { display: flex; align-items: center; gap: 12px; font-size: 43px; }
.logo svg { width: 52px; height: 58px; }
.header-right { display: flex; justify-content: flex-end; gap: 64px; }
.user { position: relative; }
.badge { position: absolute; right: -20px; top: -16px; width: 32px; height: 32px; border-radius: 50%; background: #2f6bee; }

/* page */
.page { flex: 1; display: flex; }
.sidebar { width: 326px; border-right: 2px solid #d6d8da; overflow: hidden; white-space: nowrap; }
.crumbs { margin-left: -8px; padding: 53px 0 44px; border-bottom: 2px solid #d6d8da; font-size: 32px; line-height: 48px; font-weight: bold; color: #717378; }
.crumbs i { font-style: normal; color: #21242c; margin-left: 4px; }
.lessons { list-style: none; margin-left: -6px; padding: 31px 0; display: flex; flex-direction: column; gap: 64px; border-bottom: 2px solid #d6d8da; }
.lessons a { display: block; font-size: 30px; line-height: 36px; color: #3b3e40; }
.lessons a.active { color: #2d63e2; }
.next { margin-left: -12px; padding-top: 44px; font-size: 34px; line-height: 42px; }
.next small { margin-left: 6px; font-size: 28px; }

main { flex: 1; display: flex; flex-direction: column; }
.intro { padding: 63px 0 23px 990px; border-bottom: 6px solid #93b1f0; color: #21242c; }
h1 { max-width: 1200px; font-size: 70px; line-height: 75px; }
.standard { margin-top: 25px; font-size: 32px; line-height: 40px; color: #4b4e53; }
.sharing { margin-top: 32px; display: flex; gap: 64px; font-size: 34px; line-height: 48px; }
.sharing a { display: flex; align-items: center; gap: 16px; color: #21242c; }
.sharing svg { fill: #21242c; }
.i26 { width: 26px; height: 26px; }
.i32 { width: 32px; height: 26px; }
.exercise { flex: 1; margin: 4px 892px 0 990px; border-top: 2px solid #d6d3d3; }
.question { padding: 43px 32px 0; font-size: 28px; line-height: 40px; }
.prompt { font-weight: bold; }
.equation { margin-top: 32px; padding: 0 4px; height: 88px; display: flex; align-items: center; gap: 14px; font-family: "Liberation Serif", serif; font-size: 36px; }
.frac { display: flex; flex-direction: column; text-align: center; line-height: 44px; }
.frac span + span { border-top: 2px solid #555; }
.equation input { width: 160px; height: 34px; border: 2px solid #c4c6c8; background: #fff; font: inherit; }
.stuck { margin-top: 64px; padding: 50px 4px 0 0; display: flex; justify-content: space-between; border-top: 2px solid #d6d8da; }
.stuck span a { margin-left: 6px; font-weight: bold; }
.stuck .report { color: #888d93; }

.taskbar { height: 122px; margin-bottom: 169px; padding-left: 66px; display: flex; align-items: center; border-top: 2px solid #d6d8da; border-bottom: 2px solid #c6c8ca; box-shadow: 0 2px 8px #eee; }
.scratch { background: none; }
.scratch svg { width: 50px; height: 50px; }
.progress { margin-left: auto; display: flex; align-items: center; }
.count { margin-right: 29px; font-size: 32px; font-weight: bold; color: #21242c; }
.dot { width: 16px; height: 16px; margin: 0 8px; border: 4px solid #b8b9bb; border-radius: 50%; }
.dot.done { background: #7cae35; border-color: #7cae35; margin-left: 4px; }
.dot.now { width: 24px; height: 24px; margin: 0 4px; }
.check { width: 214px; height: 80px; margin-left: 40px; padding-left: 96px; text-align: left; border-radius: 8px 0 0 8px; background: #b8b9bb; color: #e6e7e8; font-size: 32px; font-weight: bold; }

.site-footer { height: 153px; padding: 90px 590px 0; display: grid; grid-template-columns: 928px 331px 330px auto; background: #11295f; font-size: 24px; line-height: 40px; overflow: hidden; }
.site-footer a { color: #8b99c0; }
.site-footer .about { color: #fff; font-weight: bold; }
.mission { padding-top: 18px; font-size: 40px; color: #7f90b8; }

/* desktop behind the browser window */
.desktop { position: relative; overflow: hidden; }
.wallpaper { position: absolute; left: 0; top: 0; width: 100%; height: 100%; }
.zoombar { position: relative; height: 52px; margin: 0 252px; padding: 0 24px 0 63px; display: flex; align-items: center; background: linear-gradient(90deg, #1b1a19 30%, #303233 38%, #161616 50%, #221b18 58%, #161616 66%, #363a3a 74%, #211e1d 82%, #1b1817); border-radius: 0 0 12px 12px; box-shadow: 0 1px 0 2px #8d7f89; font-family: Inter, sans-serif; font-size: 24px; color: #8a8a8a; overflow: hidden; }
.z-video { margin-left: 88px; }
.z-mid { margin-left: 904px; }
.z-chat { margin-left: 88px; }
.z-share { margin-left: 72px; color: #4aa84e; }
.z-rec { margin-left: 62px; }
.z-react { margin-left: 70px; }
.leave { align-self: flex-start; width: 128px; height: 54px; margin: -27px 0 0 auto; border-radius: 14px; background: #8f2b24; color: #d5c8c6; font-size: 28px; font-weight: bold; }

.dock { position: relative; height: 140px; margin: 2px 398px 0; padding: 15px 6px 0 8px; display: flex; border-radius: 12px 12px 0 0; background: linear-gradient(90deg, #f0cdea, #dcc2f2 9%, #f2cfe9 20%, #f4d4ec 40%, #f4cce9 56%, #f3e9ee 64%, #f1e7f0 72%, #cabff5 80%, #cfc5f6 88%, #f1edf2 95%); }
.app { position: relative; width: 116px; display: flex; justify-content: center; }
.app svg { width: 98px; height: 102px; }
.running::after { content: ""; position: absolute; left: 54px; top: 113px; width: 8px; height: 8px; border-radius: 50%; background: #5c4a6c; }
.count-badge { position: absolute; right: 1px; top: -3px; width: 41px; height: 41px; border-radius: 50%; background: #ee5548; color: #fff; font: 24px/41px Inter, sans-serif; text-align: center; }
.sep { width: 2px; height: 104px; margin: 3px 25px 0 26px; background: #a08eb5; }

.preview { position: absolute; right: 0; top: 0; width: 186px; height: 100%; padding-left: 26px; background: #ad9ba6; }
.preview svg { width: 160px; height: 155px; padding: 11px 0 10px 10px; background: #fff; }
```
